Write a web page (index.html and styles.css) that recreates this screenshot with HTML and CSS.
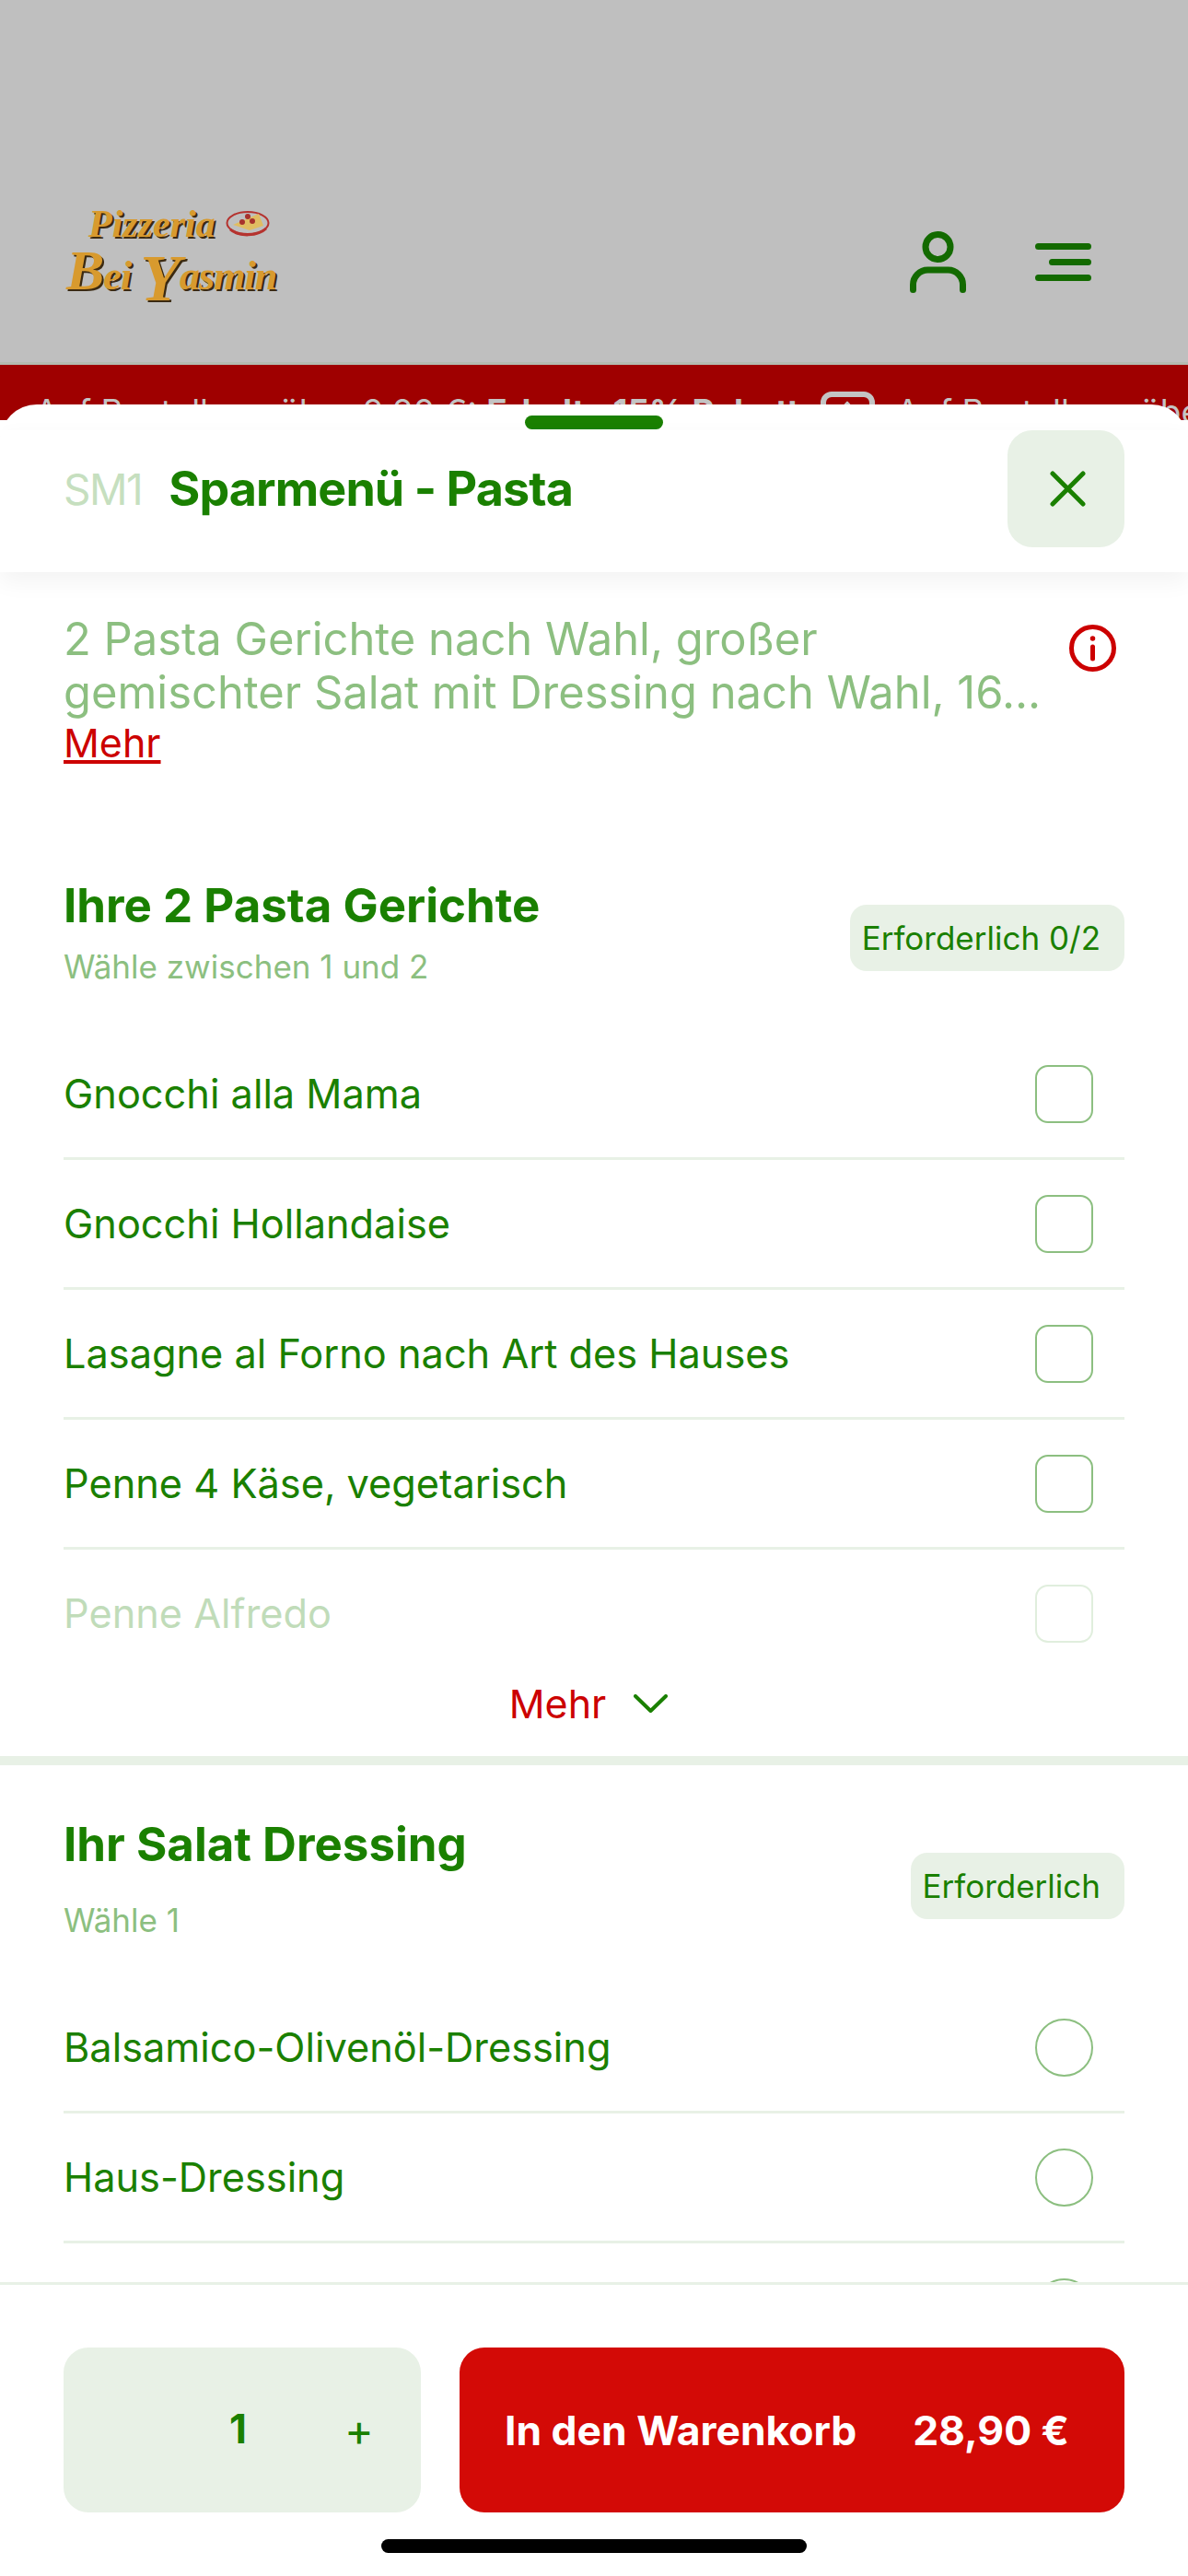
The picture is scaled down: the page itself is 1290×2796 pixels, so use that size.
FILE: index.html
```html
<!DOCTYPE html>
<html lang="de">
<head>
    <meta charset="utf-8" />
    <title>Sparmenü - Pasta</title>
    <link rel="stylesheet" href="styles.css">
</head>
<body>
    <div class="page">
        <header class="topbar">
            <div class="logo">
                <div class="logo-top">
                    <span class="logo-small">Pizzeria</span>
                    <svg class="logo-plate" width="48" height="30" viewBox="0 0 48 30">
                        <ellipse cx="24" cy="14" rx="22.500" ry="12" fill="none" stroke="#b5332f" stroke-width="2"/>
                        <path d="M5 21c9 8 29 8 39-1" fill="none" stroke="#b5332f" stroke-width="3"/>
                        <path d="M8 16 36 4l5 13-15 5z" fill="#e0bd62"/>
                        <circle cx="24" cy="7" r="3" fill="#a7322c"/>
                        <circle cx="18" cy="13" r="3" fill="#a7322c"/>
                        <circle cx="29" cy="12" r="3" fill="#a7322c"/>
                    </svg>
                </div>
                <div class="logo-big"><span class="logo-cap">B</span>ei <span class="logo-cap-y">Y</span>asmin</div>
            </div>
            <div class="topbar-icons">
                <svg width="61" height="67" viewBox="0 0 61 67" fill="none" stroke="#136a00" stroke-width="7" stroke-linecap="round">
                    <circle cx="30.500" cy="17" r="13.500"/>
                    <path d="M3.500 63.500V58a16 16 0 0 1 16-16h22a16 16 0 0 1 16 16v5.500"/>
                </svg>
                <svg width="61" height="41" viewBox="0 0 61 41" fill="none" stroke="#136a00" stroke-width="7" stroke-linecap="round">
                    <path d="M3.500 3.500h54M18.500 20.500h39M3.500 37.500h54"/>
                </svg>
            </div>
        </header>

        <div class="ticker">
            <span class="ticker-text">Auf Bestellung über 0,00 €: <b>Erhalte 15% Rabatt</b></span>
            <span class="ticker-box"><span class="ticker-arrow"></span></span>
            <span class="ticker-text">Auf Bestellung über 0,00 €: <b>Erhalte 15% Rabatt</b></span>
        </div>

        <div class="sheet">
            <div class="handle"></div>
            <div class="sheet-head">
                <span class="item-code">SM1</span>
                <h1 class="item-name">Sparmenü - Pasta</h1>
                <button class="close-btn" type="button">
                    <svg width="39" height="39" viewBox="0 0 39 39" fill="none" stroke="#1a8000" stroke-width="5" stroke-linecap="round">
                        <path d="M3 3l33 33M36 3 3 36"/>
                    </svg>
                </button>
            </div>

            <div class="sheet-body">
                <div class="intro">
                    <div class="intro-text">
                        <p class="desc">2 Pasta Gerichte nach Wahl, großer<br>gemischter Salat mit Dressing nach Wahl, 16...</p>
                        <a class="more-link">Mehr</a>
                    </div>
                    <svg class="info-icon" width="51" height="51" viewBox="0 0 51 51" fill="none" stroke="#cc0000" stroke-width="5" stroke-linecap="round">
                        <circle cx="25.500" cy="25.500" r="23"/>
                        <path d="M25.500 24v13"/>
                        <circle cx="25.500" cy="15" r="2" fill="#cc0000" stroke-width="1.500"/>
                    </svg>
                </div>

                <section class="group">
                    <div class="group-head">
                        <div>
                            <h2 class="group-title">Ihre 2 Pasta Gerichte</h2>
                            <div class="group-sub">Wähle zwischen 1 und 2</div>
                        </div>
                        <span class="badge">Erforderlich 0/2</span>
                    </div>
                    <div class="row"><span>Gnocchi alla Mama</span><span class="check"></span></div>
                    <div class="row"><span>Gnocchi Hollandaise</span><span class="check"></span></div>
                    <div class="row"><span>Lasagne al Forno nach Art des Hauses</span><span class="check"></span></div>
                    <div class="row"><span>Penne 4 Käse, vegetarisch</span><span class="check"></span></div>
                    <div class="row row-faded"><span>Penne Alfredo</span><span class="check"></span></div>
                    <div class="show-more">
                        <span>Mehr</span>
                        <svg width="37" height="20" viewBox="0 0 37 20" fill="none" stroke="#1a8000" stroke-width="4" stroke-linecap="round" stroke-linejoin="round">
                            <path d="M2 2l16.500 16L35 2"/>
                        </svg>
                    </div>
                </section>

                <section class="group group-second">
                    <div class="group-head">
                        <div>
                            <h2 class="group-title">Ihr Salat Dressing</h2>
                            <div class="group-sub group-sub-wide">Wähle 1</div>
                        </div>
                        <span class="badge">Erforderlich</span>
                    </div>
                    <div class="row"><span>Balsamico-Olivenöl-Dressing</span><span class="radio"></span></div>
                    <div class="row"><span>Haus-Dressing</span><span class="radio"></span></div>
                    <div class="row"><span></span><span class="radio"></span></div>
                </section>
            </div>

            <footer class="sheet-foot">
                <div class="foot-actions">
                    <div class="qty">
                        <span class="qty-num">1</span>
                        <span class="qty-plus">+</span>
                    </div>
                    <button class="cart-btn" type="button">
                        <span>In den Warenkorb</span>
                        <span>28,90 €</span>
                    </button>
                </div>
                <div class="home-bar"></div>
            </footer>
        </div>
    </div>
</body>
</html>
```

FILE: styles.css
```css
* {
    padding: 0;
    margin: 0;
    box-sizing: border-box;
}

body {
    font-family: Inter, "Liberation Sans", sans-serif;
    background: #fff;
    color: #1a8000;
}

.page {
    position: relative;
    width: 1290px;
    height: 2796px;
    overflow: hidden;
}

/* dimmed page behind the sheet */
.topbar {
    height: 396px;
    padding: 222px 105px 0 72px;
    display: flex;
    justify-content: space-between;
    align-items: flex-start;
    background: #bfbfbf;
    border-bottom: 3px solid #b4bab0;
}

.logo {
    width: 236px;
    font-family: "Liberation Serif", serif;
    font-style: italic;
    font-weight: 700;
    color: #d89a2e;
    text-shadow: 2px 2px 0 #3b2a12;
}

.logo-top {
    display: flex;
    align-items: center;
    gap: 11px;
    padding-left: 24px;
    height: 42px;
}

.logo-small {
    font-size: 42px;
    line-height: 42px;
}

.logo-plate {
    flex: none;
}

.logo-big {
    margin-top: 6px;
    font-size: 44px;
    line-height: 60px;
    white-space: nowrap;
    letter-spacing: -1px;
}

.logo-cap {
    font-size: 62px;
    line-height: 0;
}

.logo-cap-y {
    font-size: 72px;
    line-height: 0;
    vertical-align: -12px;
}

.topbar-icons {
    display: flex;
    align-items: center;
    gap: 75px;
    margin-top: 29px;
}

.ticker {
    height: 60px;
    padding: 29px 0 0 38px;
    display: flex;
    align-items: flex-start;
    gap: 23px;
    background: #9f0000;
    color: #c4c4c4;
    font-size: 37px;
    line-height: 44px;
    white-space: nowrap;
    overflow: hidden;
}

.ticker-box {
    flex: none;
    width: 59px;
    height: 59px;
    display: flex;
    justify-content: center;
    padding-top: 7px;
    border: 6px solid #c4c4c4;
    border-radius: 12px;
}

.ticker-arrow {
    width: 12px;
    height: 12px;
    border-left: 4px solid #c4c4c4;
    border-top: 4px solid #c4c4c4;
    transform: rotate(45deg);
}

/* bottom sheet, lies over the page */
.sheet {
    position: absolute;
    top: 439px;
    left: 0;
    right: 0;
    bottom: 0;
    display: flex;
    flex-direction: column;
    background: #fff;
    border-radius: 40px 40px 0 0;
    overflow: hidden;
}

.handle {
    flex: none;
    width: 150px;
    height: 15px;
    margin: 12px auto 1px;
    background: #1a8000;
    border-radius: 8px;
}

.sheet-head {
    flex: none;
    position: relative;
    z-index: 1;
    display: flex;
    align-items: center;
    padding: 0 69px 27px 69px;
    background: #fff;
    box-shadow: 0 10px 24px rgba(0, 0, 0, 0.05);
}

.item-code {
    font-size: 46px;
    color: #c6dfbf;
    letter-spacing: -1.5px;
}

.item-name {
    flex: 1;
    margin-left: 29px;
    font-size: 52px;
    font-weight: 700;
    letter-spacing: -0.9px;
}

.close-btn {
    flex: none;
    width: 127px;
    height: 127px;
    padding-left: 4px;
    display: flex;
    justify-content: center;
    align-items: center;
    background: #e8f1e6;
    border: 0;
    border-radius: 27px;
}

.sheet-body {
    flex: 1;
    min-height: 0;
    overflow: hidden;
}

.intro {
    display: flex;
    justify-content: space-between;
    padding: 44px 78px 122px 69px;
}

.desc {
    font-size: 48.900px;
    line-height: 58px;
    color: #8cbf80;
    white-space: nowrap;
}

.more-link {
    display: block;
    width: fit-content;
    font-size: 43px;
    line-height: 50px;
    color: #cc0000;
    text-decoration: underline;
}

.info-icon {
    flex: none;
    margin-top: 13px;
}

.group {
    padding: 0 69px;
}

.group-head {
    display: flex;
    justify-content: space-between;
    align-items: flex-start;
    padding-bottom: 47px;
}

.group-title {
    font-size: 51px;
    line-height: 60px;
    font-weight: 700;
}

.group-sub {
    margin-top: 14px;
    font-size: 35px;
    line-height: 44px;
    color: #8cbf80;
}

.group-sub-wide {
    margin-top: 30px;
}

.badge {
    flex: none;
    height: 72px;
    margin-top: 29px;
    padding: 0 26px 0 13px;
    display: flex;
    align-items: center;
    font-size: 35px;
    background: #e8f1e6;
    border-radius: 18px;
}

.row {
    height: 141px;
    padding: 0 34px 0 0;
    display: flex;
    justify-content: space-between;
    align-items: center;
    font-size: 43.300px;
    border-bottom: 3px solid #e8f1e6;
}

.row-faded {
    height: 138px;
    opacity: 0.27;
    border-bottom: 0;
}

.check,
.radio {
    flex: none;
    width: 63px;
    height: 63px;
    border: 2px solid #8cbf80;
    border-radius: 14px;
}

.radio {
    border-radius: 50%;
}

.show-more {
    height: 86px;
    padding: 0 12px 28px 0;
    display: flex;
    justify-content: center;
    align-items: center;
    gap: 30px;
    font-size: 43px;
    color: #cc0000;
}

.group-second {
    padding-top: 56px;
    border-top: 10px solid #e8f1e6;
}

.group-second .badge {
    margin-top: 39px;
}

.sheet-foot {
    flex: none;
    padding: 68px 69px 0;
    height: 319px;
    background: #fff;
    border-top: 3px solid #e8f1e6;
}

.foot-actions {
    display: flex;
    gap: 42px;
}

.qty {
    width: 388px;
    height: 179px;
    display: flex;
    align-items: center;
    background: #e8f1e6;
    border-radius: 27px;
    padding-left: 180px;
}

.qty-num {
    margin-bottom: 4px;
    font-size: 44px;
    font-weight: 700;
}

.qty-plus {
    margin-left: 106px;
    font-size: 48px;
}

.cart-btn {
    flex: 1;
    height: 179px;
    padding: 0 60px 0 49px;
    display: flex;
    justify-content: space-between;
    align-items: center;
    font-family: inherit;
    font-size: 44.400px;
    font-weight: 700;
    color: #fff;
    background: #d30a06;
    border: 0;
    border-radius: 27px;
}

.home-bar {
    width: 462px;
    height: 15px;
    margin: 29px auto 0;
    background: #000;
    border-radius: 8px;
}
```
